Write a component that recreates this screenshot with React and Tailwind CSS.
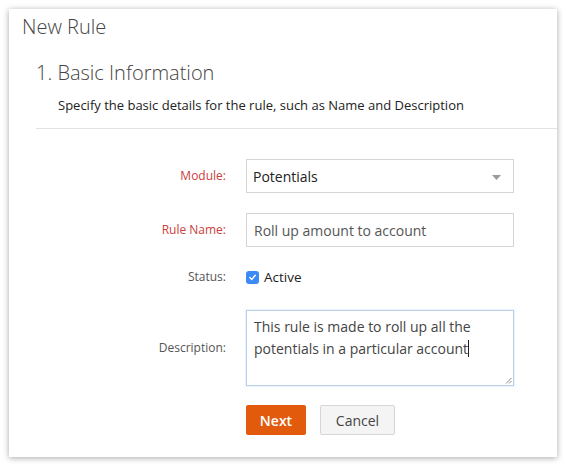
export default function App() {
  return (
    <div className="w-[566px] h-[466px] bg-white pt-[9px] pl-[9px] font-['Open_Sans',sans-serif]">
      <div className="w-[548px] h-[448px] bg-white shadow-[0_1px_6px_rgba(0,0,0,0.35)] flex flex-col">
        <div className="pl-[13px] pt-[6px] text-[20px] leading-[24px] text-[#444] font-light">New Rule</div>
        <div className="ml-[27px] mt-[21px] text-[20px] leading-[26px] text-[#444] font-light">1. Basic Information</div>
        <div className="ml-[49px] mt-[10px] text-[13px] leading-[18px] text-[#222]">
          Specify the basic details for the rule, such as Name and Description
        </div>
        <div className="ml-[27px] mt-[14px] h-px bg-[#e2e2e2]"></div>
        <div className="mt-[30px] grid grid-cols-[217px_268px] gap-x-[20px] items-center text-[12px]">
          <div className="text-right text-[#c9403d]">Module:</div>
          <div className="relative h-[34px] border border-[#d4d4d4] flex items-center pl-[6px] text-[14px] text-[#222]">
            Potentials
            <svg className="absolute right-[12px] top-[15px]" width="9" height="5" viewBox="0 0 9 5">
              <path d="M0 0 L9 0 L4.5 5 Z" fill="#9a9a9a" />
            </svg>
          </div>

          <div className="mt-[20px] text-right text-[#c9403d]">Rule Name:</div>
          <div className="mt-[20px] h-[34px] border border-[#d4d4d4] flex items-center pl-[7px] text-[14px] text-[#555]">
            Roll up amount to account
          </div>

          <div className="mt-[20px] h-[20px] flex items-center justify-end text-[#555]">Status:</div>
          <div className="mt-[20px] h-[20px] flex items-center gap-[5px] text-[13.5px] text-[#222]">
            <span className="w-[13px] h-[13px] rounded-[3px] bg-[#3b8af5] flex items-center justify-center">
              <svg width="9" height="9" viewBox="0 0 9 9">
                <path d="M1.8 4.6 L3.7 6.5 L7.3 2.2" fill="none" stroke="white" strokeWidth="1.4" strokeLinecap="round" strokeLinejoin="round" />
              </svg>
            </span>
            Active
          </div>

          <div className="mt-[23px] text-right text-[#555]">Description:</div>
          <div className="mt-[23px] relative h-[76px] border border-[#b9cfe6] shadow-[0_0_2px_rgba(120,170,230,0.4)] pl-[7px] pt-[5px] text-[14px] leading-[22px] text-[#444]">
            This rule is made to roll up all the
            <br />
            potentials in a particular account<span className="inline-block w-px h-[17px] bg-[#222] align-[-3px]"></span>
            <svg className="absolute right-[1px] bottom-[1px]" width="7" height="7" viewBox="0 0 7 7">
              <path d="M6.5 1 L1 6.5 M6.5 4 L4 6.5" stroke="#888" strokeWidth="1" />
            </svg>
          </div>

          <div></div>
          <div className="mt-[19px] flex gap-[14px]">
            <div className="w-[60px] h-[30px] bg-[#e25a0c] rounded-[2px] flex items-center justify-center text-[14px] text-white font-semibold">Next</div>
            <div className="w-[75px] h-[30px] bg-[#f4f4f4] border border-[#d6d6d6] rounded-[2px] flex items-center justify-center text-[14px] text-[#444]">Cancel</div>
          </div>
        </div>
      </div>
    </div>
  );
}
